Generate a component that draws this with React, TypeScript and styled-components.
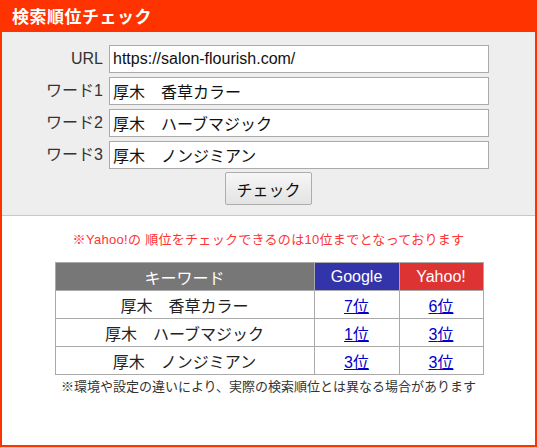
import React from 'react'
import styled, { createGlobalStyle } from 'styled-components'

const GlobalStyle = createGlobalStyle`
  html, body {
    margin: 0;
    padding: 0;
    background: #fff;
  }
  body {
    font-family: "Liberation Sans", "Noto Sans CJK JP", sans-serif;
    color: #333;
  }
`

interface IRank {
  keyword: string
  google: number
  yahoo: number
}

const ranks: IRank[] = [
  { keyword: '厚木　香草カラー', google: 7, yahoo: 6 },
  { keyword: '厚木　ハーブマジック', google: 1, yahoo: 3 },
  { keyword: '厚木　ノンジミアン', google: 3, yahoo: 3 },
]

const fields = [
  { label: 'URL', value: 'https://salon-flourish.com/' },
  { label: 'ワード1', value: '厚木　香草カラー' },
  { label: 'ワード2', value: '厚木　ハーブマジック' },
  { label: 'ワード3', value: '厚木　ノンジミアン' },
]

export default function App() {
  return (
    <>
      <GlobalStyle />
      <Frame>
        <Header>検索順位チェック</Header>
        <Form>
          <Fields>
            {fields.map((f) => (
              <React.Fragment key={f.label}>
                <Label>{f.label}</Label>
                <Input defaultValue={f.value} />
              </React.Fragment>
            ))}
          </Fields>
          <CheckButton>チェック</CheckButton>
        </Form>
        <Result>
          <Notice>※Yahoo!の 順位をチェックできるのは10位までとなっております</Notice>
          <Table>
            <thead>
              <tr>
                <Th $bg="#777777">キーワード</Th>
                <Th $bg="#3333aa">Google</Th>
                <Th $bg="#dd3333">Yahoo!</Th>
              </tr>
            </thead>
            <tbody>
              {ranks.map((r) => (
                <tr key={r.keyword}>
                  <Td>{r.keyword}</Td>
                  <Td><RankLink href="#">{r.google}位</RankLink></Td>
                  <Td><RankLink href="#">{r.yahoo}位</RankLink></Td>
                </tr>
              ))}
            </tbody>
          </Table>
          <Footnote>※環境や設定の違いにより、実際の検索順位とは異なる場合があります</Footnote>
        </Result>
      </Frame>
    </>
  )
}

const Frame = styled.div`
  box-sizing: border-box;
  width: 537px;
  height: 447px;
  border: 2px solid #ff3300;
  border-top: 0;
  display: flex;
  flex-direction: column;
`
const Header = styled.h1`
  margin: 0 -2px;
  height: 32px;
  background: #ff3300;
  color: #fff;
  font-size: 17px;
  font-weight: bold;
  line-height: 32px;
  padding-left: 12px;
  letter-spacing: 0.5px;
  font-family: "Noto Sans CJK JP", sans-serif;
`
const Form = styled.div`
  background: #eeeeee;
  border-bottom: 1px solid #c8c8c8;
  padding: 13px 0 10px;
  display: flex;
  flex-direction: column;
  align-items: center;
`
const Fields = styled.div`
  align-self: flex-start;
  display: grid;
  grid-template-columns: 101px 380px;
  column-gap: 6px;
  row-gap: 4px;
  align-items: center;
`
const Label = styled.label`
  text-align: right;
  font-size: 16px;
  color: #333;
  line-height: 28px;
`
const Input = styled.input`
  box-sizing: border-box;
  height: 28px;
  width: 380px;
  border: 1px solid #aaaaaa;
  background: #fff;
  padding: 0 3px;
  font-family: "Liberation Sans", "Noto Sans CJK JP", sans-serif;
  font-size: 16px;
  color: #111;
  outline: none;
`
const CheckButton = styled.button`
  margin-top: 3px;
  width: 87px;
  height: 33px;
  border: 1px solid #adadad;
  border-radius: 2px;
  background: linear-gradient(#f6f6f6, #e3e3e3);
  font-family: "Noto Sans CJK JP", sans-serif;
  font-size: 16px;
  color: #111;
  padding: 0;
`
const Result = styled.div`
  display: flex;
  flex-direction: column;
  align-items: center;
  padding-top: 14px;
`
const Notice = styled.p`
  margin: 0 0 12px;
  color: #ff3333;
  font-size: 13px;
  letter-spacing: 0.3px;
  line-height: 20px;
`
const Table = styled.table`
  border-collapse: collapse;
  width: 429px;
  table-layout: fixed;
  margin-left: 1px;
  th:nth-child(1) { width: 258px; }
  th:nth-child(2) { width: 84px; }
`
const Th = styled.th<{ $bg: string }>`
  background: ${(p) => p.$bg};
  color: #fff;
  font-weight: normal;
  font-size: 16px;
  height: 27px;
  padding: 0;
  border: 1px solid #aaaaaa;
  text-align: center;
`
const Td = styled.td`
  border: 1px solid #aaaaaa;
  height: 27px;
  padding: 0;
  text-align: center;
  font-size: 16px;
  color: #222;
  background: #fff;
`
const RankLink = styled.a`
  color: #0000cc;
  text-decoration: underline;
`
const Footnote = styled.p`
  margin: 3px 0 0;
  font-size: 13px;
  color: #333;
  line-height: 18px;
`
